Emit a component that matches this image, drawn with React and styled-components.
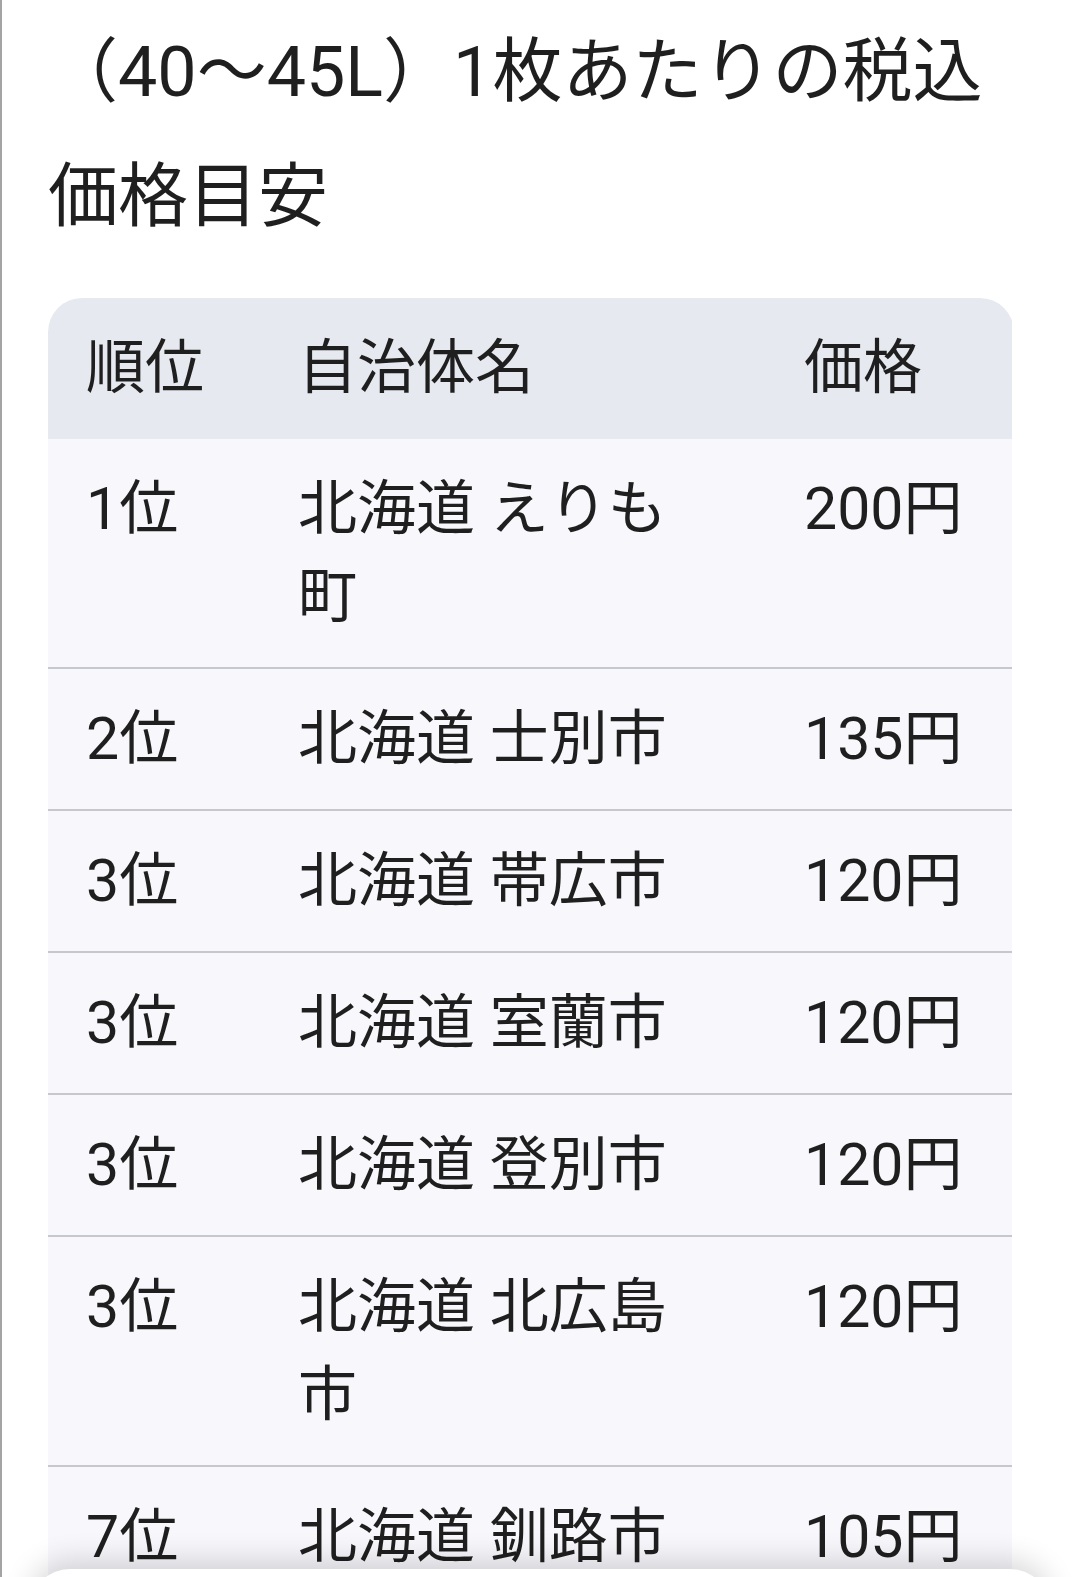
import React from "react";
import styled, { createGlobalStyle } from "styled-components";

const GlobalStyle = createGlobalStyle`
  html, body {
    margin: 0;
    padding: 0;
    background: #ffffff;
  }
  body {
    font-family: Roboto, "Noto Sans CJK JP", "Noto Sans", sans-serif;
    color: #1f1f1f;
  }
`;

const Page = styled.div`
  min-height: 100vh;
  box-sizing: border-box;
  border-left: 2px solid #a4a4a4;
  padding: 10px 66px 0 46px;
`;

const Heading = styled.h2`
  margin: 0;
  font-size: 70px;
  font-weight: 400;
  line-height: 125px;
  color: #1f1f1f;
`;

const TableWrap = styled.div`
  margin-top: 38px;
  border-radius: 34px 34px 0 0;
  overflow: hidden;
`;

const Table = styled.table`
  width: 964px;
  border-collapse: collapse;
  table-layout: fixed;
  font-size: 59px;
  line-height: 88px;
`;

const HeadRow = styled.tr`
  background: #e6eaf0;
`;

const Row = styled.tr`
  background: #f8f8fc;
  border-bottom: 2px solid #c6c8ce;
`;

const HeadCell = styled.th`
  text-align: left;
  font-weight: 400;
  padding: 26px ${(p) => p.$pr || 38}px 27px 38px;
  vertical-align: top;
`;

const Cell = styled.td`
  padding: 26px ${(p) => p.$pr || 38}px 26px 38px;
  vertical-align: top;
`;

const BottomSheet = styled.div`
  position: fixed;
  left: 30px;
  right: 30px;
  bottom: -40px;
  height: 48px;
  background: #ffffff;
  border-radius: 40px 40px 0 0;
  box-shadow: 0 -8px 30px rgba(0, 0, 0, 0.16);
`;

const rows = [
  ["1位", "北海道 えりも町", "200円"],
  ["2位", "北海道 士別市", "135円"],
  ["3位", "北海道 帯広市", "120円"],
  ["3位", "北海道 室蘭市", "120円"],
  ["3位", "北海道 登別市", "120円"],
  ["3位", "北海道 北広島市", "120円"],
  ["7位", "北海道 釧路市", "105円"],
];

export default function App() {
  return (
    <>
      <GlobalStyle />
      <Page>
        <Heading>（40〜45L）1枚あたりの税込価格目安</Heading>
        <TableWrap>
          <Table>
            <colgroup>
              <col style={{ width: "212px" }} />
              <col style={{ width: "506px" }} />
              <col style={{ width: "246px" }} />
            </colgroup>
            <thead>
              <HeadRow>
                <HeadCell>順位</HeadCell>
                <HeadCell $pr={70}>自治体名</HeadCell>
                <HeadCell>価格</HeadCell>
              </HeadRow>
            </thead>
            <tbody>
              {rows.map((r, i) => (
                <Row key={i}>
                  <Cell>{r[0]}</Cell>
                  <Cell $pr={70}>{r[1]}</Cell>
                  <Cell>{r[2]}</Cell>
                </Row>
              ))}
            </tbody>
          </Table>
        </TableWrap>
      </Page>
      <BottomSheet />
    </>
  );
}
